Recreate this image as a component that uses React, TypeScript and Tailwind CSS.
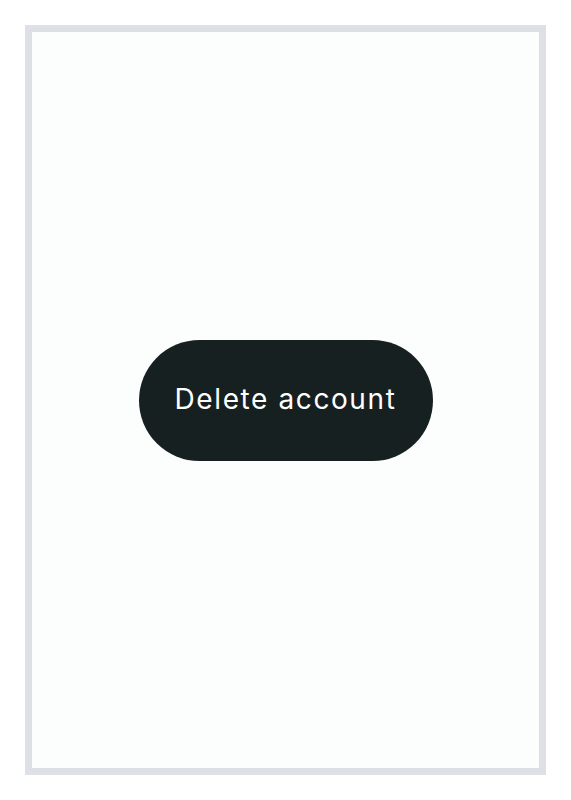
import React from "react";

export default function App() {
  return (
    <div className="w-full h-[800px] bg-white p-[25px]">
      <div className="h-full w-full border-[7px] border-[#dde1e6] bg-[#fcfdfd] flex items-center justify-center">
        <button
          className="h-[121px] w-[294px] rounded-full bg-[#172020] text-white text-[28px] tracking-[1.6px] flex items-center justify-center pb-[3px]"
          style={{ fontFamily: "Inter, 'Noto Sans', sans-serif" }}
        >
          Delete account
        </button>
      </div>
    </div>
  );
}
